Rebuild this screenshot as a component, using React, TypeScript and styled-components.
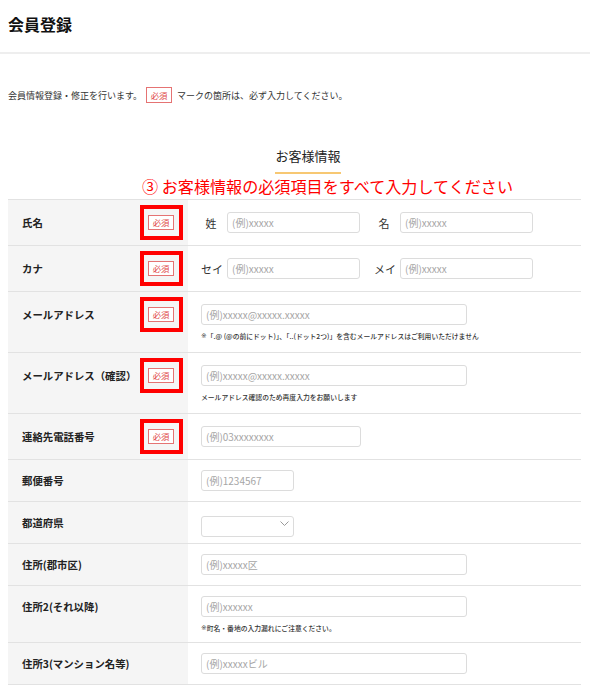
import type { FC, ReactNode } from 'react'
import styled, { createGlobalStyle } from 'styled-components'

type Field = {
  label: string
  required?: boolean
  note?: ReactNode
  control: ReactNode
}

const ChevronIcon: FC = () => (
  <svg width="9" height="5" viewBox="0 0 9 5" fill="none">
    <polyline points="0.5,0.5 4.5,4.5 8.5,0.5" stroke="#9a9a9a" strokeWidth="1" />
  </svg>
)

const Prefecture: FC = () => (
  <SelectWrap>
    <Select defaultValue="">
      <option value="" />
    </Select>
    <ChevronSlot>
      <ChevronIcon />
    </ChevronSlot>
  </SelectWrap>
)

const NamePair: FC<{ first: string; last: string }> = ({ first, last }) => (
  <PairRow>
    <Pair>
      <SubLabel>{first}</SubLabel>
      <TextInput $w={133} placeholder="(例)xxxxx" />
    </Pair>
    <Pair>
      <SubLabel>{last}</SubLabel>
      <TextInput $w={133} placeholder="(例)xxxxx" />
    </Pair>
  </PairRow>
)

// built at render time so the styled components below are defined
const buildFields = (): Field[] => [
  { label: '氏名', required: true, control: <NamePair first="姓" last="名" /> },
  { label: 'カナ', required: true, control: <NamePair first="セイ" last="メイ" /> },
  {
    label: 'メールアドレス',
    required: true,
    note: (
      <>
        <Mark>※</Mark>「.@ (@の前にドット)」、「..(ドット2つ)」を含むメールアドレスはご利用いただけません
      </>
    ),
    control: <TextInput $w={266} placeholder="(例)xxxxx@xxxxx.xxxxx" />
  },
  {
    label: 'メールアドレス（確認）',
    required: true,
    note: 'メールアドレス確認のため再度入力をお願いします',
    control: <TextInput $w={266} placeholder="(例)xxxxx@xxxxx.xxxxx" />
  },
  { label: '連絡先電話番号', required: true, control: <TextInput $w={160} placeholder="(例)03xxxxxxxx" /> },
  { label: '郵便番号', control: <TextInput $w={93} placeholder="(例)1234567" /> },
  { label: '都道府県', control: <Prefecture /> },
  { label: '住所(郡市区)', control: <TextInput $w={266} placeholder="(例)xxxxx区" /> },
  {
    label: '住所2(それ以降)',
    note: (
      <>
        <Mark>※</Mark>町名・番地の入力漏れにご注意ください。
      </>
    ),
    control: <TextInput $w={266} placeholder="(例)xxxxxx" />
  },
  { label: '住所3(マンション名等)', control: <TextInput $w={266} placeholder="(例)xxxxxビル" /> }
]

const App: FC = () => {
  const fields = buildFields()

  return (
    <>
      <GlobalStyle />
      <Header>
        <Title>会員登録</Title>
      </Header>

      <Main>
        {/* Intro */}
        <Intro>
          会員情報登録・修正を行います。<Badge $inline>必須</Badge>マークの箇所は、必ず入力してください。
        </Intro>

        {/* Section heading */}
        <SectionHead>
          <SectionTitle>お客様情報</SectionTitle>
        </SectionHead>
        <Annotation>③ お客様情報の必須項目をすべて入力してください</Annotation>

        {/* Form table */}
        <Table>
          {fields.map((f) => (
            <Row key={f.label}>
              <LabelCell $pad={f.required ? 12 : 10}>
                <LabelLine>
                  <LabelText>{f.label}</LabelText>
                  {f.required && (
                    <RedFrame>
                      <Badge>必須</Badge>
                    </RedFrame>
                  )}
                </LabelLine>
              </LabelCell>
              <ContentCell $pad={f.required ? 12 : 10}>
                {f.control}
                {f.note && <Note>{f.note}</Note>}
              </ContentCell>
            </Row>
          ))}
        </Table>
      </Main>
    </>
  )
}

// Styled Components
const GlobalStyle = createGlobalStyle`
  * { box-sizing: border-box; }
  body {
    margin: 0;
    background: #fff;
    color: #333;
    font-family: "Noto Sans CJK JP", "Noto Sans", sans-serif;
  }
`

const Header = styled.header`
  display: flex;
  align-items: center;
  height: 54px;
  padding: 0 8px 4px;
  border-bottom: 2px solid #eeeeee;
`

const Title = styled.h1`
  margin: 0;
  font-size: 16px;
  font-weight: 700;
  line-height: 20px;
  color: #111;
`

const Main = styled.main`
  padding: 0 8px;
`

const Intro = styled.p`
  display: flex;
  align-items: center;
  margin: 33px 0 0;
  height: 16px;
  font-size: 9px;
  color: #333;
`

const Badge = styled.span<{ $inline?: boolean }>`
  display: inline-flex;
  align-items: center;
  justify-content: center;
  width: 26px;
  height: ${(p) => (p.$inline ? 16 : 15)}px;
  margin: ${(p) => (p.$inline ? '0 5px 0 4px' : '0')};
  border: 1px solid #e57373;
  color: #e04848;
  font-size: 8.4px;
  line-height: 1;
  background: #fff;
`

const SectionHead = styled.div`
  display: flex;
  justify-content: center;
  width: 600px;
  margin-top: 44px;
`

const SectionTitle = styled.h2`
  margin: 0;
  padding-bottom: 8px;
  border-bottom: 2px solid #f7c873;
  font-size: 13px;
  font-weight: 400;
  line-height: 17px;
  color: #222;
`

const Annotation = styled.div`
  margin: 2px 0 3px;
  padding-left: 134px;
  font-size: 16.1px;
  line-height: 20px;
  color: #ff0000;
  white-space: nowrap;
`

const Table = styled.div`
  width: 573px;
  border-top: 1px solid #e2e2e2;
`

const Row = styled.div`
  display: grid;
  grid-template-columns: 180px 1fr;
  border-bottom: 1px solid #e2e2e2;
`

const LabelCell = styled.div<{ $pad: number }>`
  padding: ${(p) => p.$pad}px 14px;
  background: #f5f5f5;
`

const LabelLine = styled.div`
  display: flex;
  align-items: center;
  justify-content: space-between;
  height: 21px;
`

const LabelText = styled.span`
  font-size: 10.4px;
  font-weight: 700;
  color: #222;
  white-space: nowrap;
`

const RedFrame = styled.span`
  display: inline-flex;
  margin: -10px -9px -10px -8px;
  padding: 6px 5px 6px 4px;
  border: 4px solid #ff0000;
`

const ContentCell = styled.div<{ $pad: number }>`
  display: flex;
  flex-direction: column;
  align-items: flex-start;
  padding: ${(p) => p.$pad}px 13px;
  background: #fff;
`

const PairRow = styled.div`
  display: flex;
  gap: 14px;
`

const Pair = styled.div`
  display: flex;
  align-items: center;
  gap: 6px;
`

const SubLabel = styled.span`
  width: 20px;
  text-align: center;
  font-size: 11px;
  color: #333;
  white-space: nowrap;
`

const TextInput = styled.input<{ $w: number }>`
  width: ${(p) => p.$w}px;
  height: 21px;
  padding: 0 4px;
  border: 1px solid #dcdcdc;
  border-radius: 3px;
  font-family: inherit;
  font-size: 10px;
  color: #333;
  background: #fff;

  &::placeholder {
    color: #a6a6a6;
  }
`

const SelectWrap = styled.div`
  position: relative;
  width: 93px;
  height: 21px;
`

const Select = styled.select`
  width: 100%;
  height: 100%;
  border: 1px solid #dcdcdc;
  border-radius: 3px;
  background: #fff;
  appearance: none;
`

const ChevronSlot = styled.span`
  position: absolute;
  right: 5px;
  top: 9px;
  display: flex;
  pointer-events: none;
`

const Note = styled.p`
  display: flex;
  align-items: center;
  height: 8px;
  margin: 7px 0 0;
  font-size: 6.8px;
  font-weight: 500;
  line-height: 8px;
  color: #333;
  white-space: nowrap;
`

const Mark = styled.span`
  font-family: "DejaVu Sans", sans-serif;
  line-height: 1;
  color: #333;
`

export default App
